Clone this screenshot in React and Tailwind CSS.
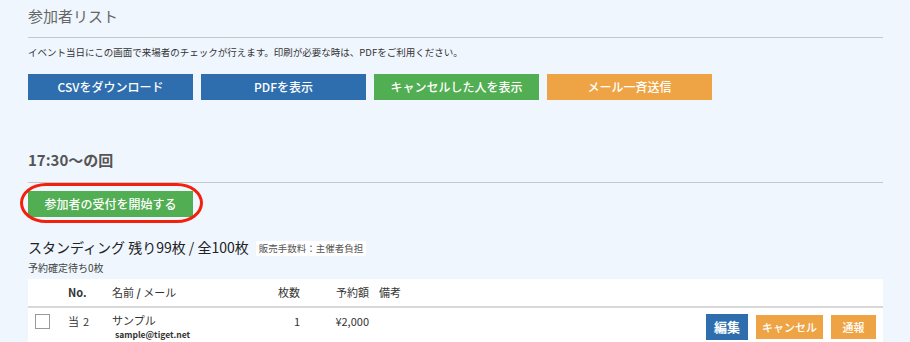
import React from 'react';

const jp = { fontFamily: '"Noto Sans CJK JP", "Noto Sans", sans-serif' };

const topButtons = [
  { label: 'CSVをダウンロード', cls: 'bg-[#2e6eae]' },
  { label: 'PDFを表示', cls: 'bg-[#2e6eae]' },
  { label: 'キャンセルした人を表示', cls: 'bg-[#51ae52]' },
  { label: 'メール一斉送信', cls: 'bg-[#eea444]' },
];

export default function App() {
  return (
    <div className="min-h-[342px] w-[910px] bg-[#eff6fe] text-[#333] overflow-hidden" style={jp}>
      <div className="pl-[28px] pr-[27px] pt-[4px]">
        <h2 className="h-[24px] text-[15px] leading-[24px] text-[#666]">参加者リスト</h2>
        <div className="mt-[9px] h-px bg-[#c8c8c8]" />
        <p className="mt-[7px] text-[9.5px] leading-[15px] text-[#333]">
          イベント当日にこの画面で来場者のチェックが行えます。印刷が必要な時は、PDFをご利用ください。
        </p>
        <div className="mt-[14px] flex gap-[8px]">
          {topButtons.map((b) => (
            <button
              key={b.label}
              className={`h-[26px] w-[165px] ${b.cls} text-[12px] font-medium text-white`}
            >
              {b.label}
            </button>
          ))}
        </div>

        <h3 className="mt-[49px] text-[15px] leading-[22px] font-semibold text-[#555]">17:30〜の回</h3>
        <div className="mt-[11px] h-px bg-[#c8c8c8]" />
        <div className="relative mt-[7px] w-[165px]">
          <button className="h-[26px] w-[165px] bg-[#51ae52] text-[12px] font-medium text-white">
            参加者の受付を開始する
          </button>
          <div className="absolute -left-[8px] -right-[10px] -top-[7px] -bottom-[6px] rounded-[26px/20px] border-[3px] border-[#f3200c]" />
        </div>

        <div className="mt-[19px] flex items-center gap-[7px]">
          <span className="text-[14px] leading-[22px] text-[#222]">スタンディング 残り99枚 / 全100枚</span>
          <span className="mt-[2px] bg-white px-[3px] text-[9.5px] leading-[15px] text-[#555]">販売手数料：主催者負担</span>
        </div>
        <p className="mt-[3px] text-[10px] leading-[14px] text-[#444]">予約確定待ち0枚</p>

        <div className="mt-[4px] bg-white">
          <div className="flex h-[29px] items-center border-b-2 border-[#d8d8d8] pb-[1px] text-[11px] text-[#333]">
            <div className="w-[40px]" />
            <div className="w-[44px] font-bold">No.</div>
            <div className="w-[150px]">名前 <b>/</b> メール</div>
            <div className="w-[38px] text-right">枚数</div>
            <div className="w-[69px] text-right">予約額</div>
            <div className="ml-[10px]">備考</div>
          </div>
          <div className="flex h-[40px] items-start pt-[6px] text-[11px] leading-[14px] text-[#333]">
            <div className="w-[40px] pl-[7px]">
              <div className="h-[15px] w-[15px] border border-[#999] bg-white" />
            </div>
            <div className="w-[44px]">
              <span className="mr-[4px]">当</span>2
            </div>
            <div className="w-[150px]">
              <div className="leading-[13px]">サンプル</div>
              <div className="ml-[3px] mt-[1px] text-[8.5px] font-semibold leading-[12px] text-[#333]">sample@tiget.net</div>
            </div>
            <div className="w-[38px] text-right">1</div>
            <div className="w-[69px] text-right">¥2,000</div>
            <div className="flex-1" />
            <div className="flex items-center gap-[8px] pr-[7px]">
              <button className="h-[26px] w-[42px] bg-[#2e6eae] text-[13px] font-bold text-white">編集</button>
              <button className="h-[24px] w-[67px] bg-[#eea444] text-[11px] font-medium text-white">キャンセル</button>
              <button className="h-[24px] w-[45px] bg-[#eea444] text-[11px] font-medium text-white">通報</button>
            </div>
          </div>
        </div>
      </div>
    </div>
  );
}
